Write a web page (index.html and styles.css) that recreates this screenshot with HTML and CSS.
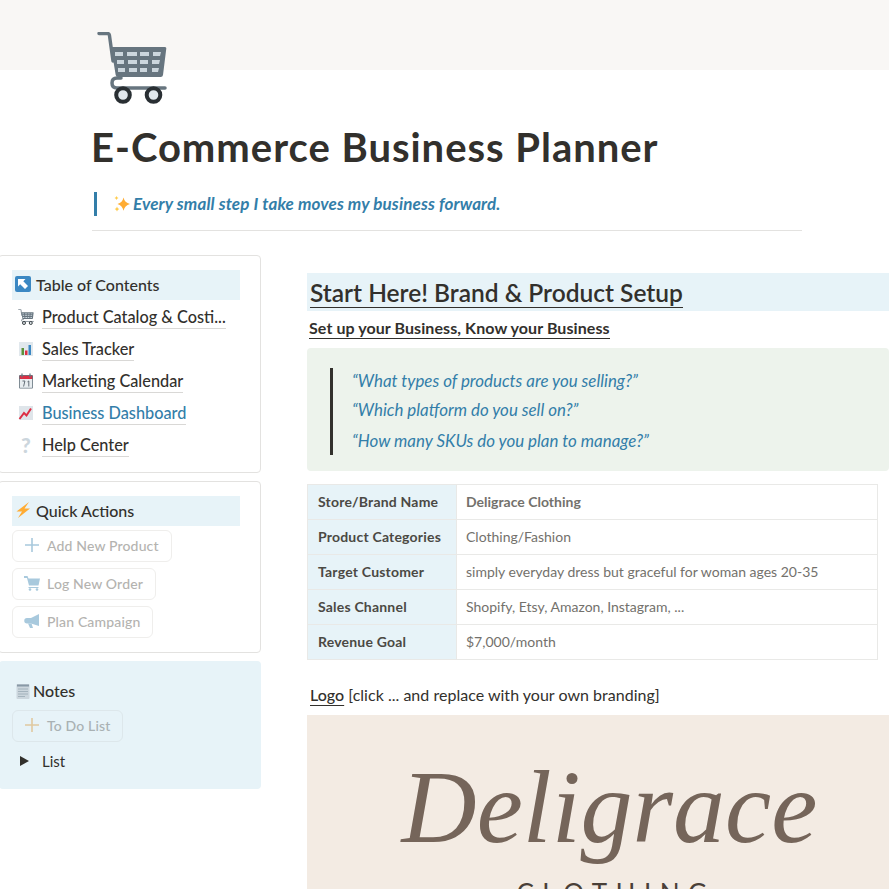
FILE: index.html
```html
<!DOCTYPE html>
<html lang="en">
<head>
  <meta charset="UTF-8" />
  <title>E-Commerce Business Planner</title>
  <link rel="stylesheet" href="styles.css">
</head>
<body>
  <svg class="defs" width="0" height="0">
    <symbol id="cart" viewBox="0 0 70 72">
      <path d="M2 1.500h8.500q1.600 0 1.900 1.600L16 29" fill="none" stroke="#67757f" stroke-width="3.400" stroke-linecap="round"/>
      <path d="M14 15h54q1.500 0 1.300 1.600L66 43q-.3 2-2.300 2H21q-2 0-2.300-2z" fill="#67757f"/>
      <path d="M18 20h8v4h-8zM30 20h10v4H30zM43 20h9v4h-9zM56 20h8l-1 4h-7zM20 28h7v4h-7zM31 28h9v4h-9zM43 28h8v4h-8zM55 28h8l-1 4h-7zM21 36h7v4h-7zM32 36h8v4h-8zM43 36h7v4h-7zM55 36h7l-1 4h-6z" fill="#ccd6dd"/>
      <path d="M68 56H20q-5 0-5-5t5-5h4" fill="none" stroke="#67757f" stroke-width="3.500" stroke-linecap="round"/>
      <circle cx="26" cy="63" r="6.800" fill="#e1e8ed" stroke="#292f33" stroke-width="4"/>
      <circle cx="56.500" cy="63" r="6.800" fill="#e1e8ed" stroke="#292f33" stroke-width="4"/>
    </symbol>
  </svg>

  <header class="cover"></header>

  <div class="page-head">
    <svg class="page-icon"><use href="#cart"/></svg>
    <h1>E-Commerce Business Planner</h1>
    <blockquote class="motto">
      <svg class="ico-spark" viewBox="0 0 16 16"><path d="M9.500 1.500q1 5 6.500 6.500-5.500 1.500-6.500 6.800Q8.500 9.500 3.500 8 8.500 6.500 9.500 1.500z" fill="#ffac33"/><path d="M2.500 0q.3 1.600 2 2-1.700.4-2 2-.3-1.600-2-2 1.700-.4 2-2zM3 10.500q.4 2 2.300 2.500-1.900.5-2.300 2.500-.4-2-2.300-2.500 1.900-.5 2.300-2.500z" fill="#ffcc4d"/></svg>
      <em>Every small step I take moves my business forward.</em>
    </blockquote>
    <hr class="divider">
  </div>

  <div class="columns">
    <aside class="sidebar">
      <section class="card card-toc">
        <h3 class="band">
          <svg class="ico" viewBox="0 0 16 16"><rect width="16" height="16" rx="2" fill="#3b88c3"/><path d="M3 3h7.500L8.300 5.200l4.700 4.700L10 13 5.200 8.200 3 10.500z" fill="#fff"/></svg>
          Table of Contents
        </h3>
        <ul class="toc">
          <li><svg class="ico"><use href="#cart"/></svg><a>Product Catalog &amp; Costi...</a></li>
          <li>
            <svg class="ico" viewBox="0 0 16 16"><rect x="1" y="1" width="14" height="14" fill="#e1e8ed"/><rect x="3.500" y="7" width="2.500" height="7" fill="#5c913b"/><rect x="7" y="9.500" width="2.500" height="4.500" fill="#dd2e44"/><rect x="10.500" y="4" width="2.500" height="10" fill="#3b88c3"/></svg>
            <a>Sales Tracker</a>
          </li>
          <li>
            <svg class="ico" viewBox="0 0 16 16"><rect x="1" y="2" width="14" height="13.500" rx="1" fill="#66757f"/><rect x="1.800" y="6" width="12.400" height="8.800" fill="#e8edf0"/><rect x="1.800" y="2.800" width="12.400" height="3.200" fill="#dd2e44"/><path d="M4 .5v4M12 .5v4" stroke="#67757f" stroke-width="1.200"/><path d="M4.500 8h2.400L5.600 13.500M9.500 8.800l1.300-.8v5.500" fill="none" stroke="#55606a" stroke-width=".9"/></svg>
            <a>Marketing Calendar</a>
          </li>
          <li class="is-blue">
            <svg class="ico" viewBox="0 0 16 16"><rect x="1" y="1" width="14" height="14" fill="#dfe5ea"/><path d="M1.500 14L6 8l2.500 2.500L13 3.500" fill="none" stroke="#dd2e44" stroke-width="2"/></svg>
            <a>Business Dashboard</a>
          </li>
          <li><span class="ico ico-q">?</span><a>Help Center</a></li>
        </ul>
      </section>

      <section class="card">
        <h3 class="band">
          <svg class="ico" viewBox="0 0 16 16"><path d="M14 0L1.500 9.500H7L3 16 15 6.500H9.500z" fill="#ffac33"/></svg>
          Quick Actions
        </h3>
        <div class="actions">
          <button class="action">
            <svg class="ico" viewBox="0 0 16 16"><path d="M8 1v14M1 8h14" stroke="#a8c9dd" stroke-width="1.600"/></svg>
            Add New Product
          </button>
          <button class="action">
            <svg class="ico" viewBox="0 0 16 16"><path d="M0 1h3.500l1 2.500H16l-1.500 7H5L3 3H0z" fill="#a8c9dd"/><path d="M4.500 12h10v1h-10z" fill="#a8c9dd"/><circle cx="6" cy="14.500" r="1.300" fill="#a8c9dd"/><circle cx="13" cy="14.500" r="1.300" fill="#a8c9dd"/></svg>
            Log New Order
          </button>
          <button class="action">
            <svg class="ico" viewBox="0 0 16 16"><path d="M15 1v12L7 10.500H3a2.500 2.500 0 0 1 0-5.500h4z" fill="#a8c9dd"/><path d="M4 10.500h3.500L9 15H6z" fill="#a8c9dd"/></svg>
            Plan Campaign
          </button>
        </div>
      </section>

      <section class="card card-notes">
        <h3 class="notes-title">
          <svg class="ico" viewBox="0 0 16 16"><rect x="1.500" y="1" width="13" height="15" rx="1" fill="#ccd6dd"/><path d="M3 6h10M3 8.500h10M3 11h10M3 13.500h7" stroke="#99aab5" stroke-width=".8"/><path d="M2 1.500h12v2H2z" fill="#8899a6"/></svg>Notes
        </h3>
        <button class="action action-notes">
          <svg class="ico" viewBox="0 0 16 16"><path d="M8 1v14M1 8h14" stroke="#e0c9a0" stroke-width="1.600"/></svg>
          To Do List
        </button>
        <div class="toggle"><span class="arrow"></span>List</div>
      </section>
    </aside>

    <main class="content">
      <h2 class="section-title"><span>Start Here! Brand &amp; Product Setup</span></h2>
      <p class="section-sub"><span>Set up your Business, Know your Business</span></p>

      <div class="callout">
        <div class="questions">
          <p>“What types of products are you selling?”</p>
          <p>“Which platform do you sell on?”</p>
          <p>“How many SKUs do you plan to manage?”</p>
        </div>
      </div>

      <table class="setup">
        <tr><th>Store/Brand Name</th><td class="strong">Deligrace Clothing</td></tr>
        <tr><th>Product Categories</th><td>Clothing/Fashion</td></tr>
        <tr><th>Target Customer</th><td>simply everyday dress but graceful for woman ages 20-35</td></tr>
        <tr><th>Sales Channel</th><td>Shopify, Etsy, Amazon, Instagram, ...</td></tr>
        <tr><th>Revenue Goal</th><td>$7,000/month</td></tr>
      </table>

      <p class="logo-label"><u>Logo</u> [click ... and replace with your own branding]</p>

      <div class="logo-box">
        <div class="logo-name">Deligrace</div>
        <div class="logo-sub">CLOTHING</div>
      </div>
    </main>
  </div>
</body>
</html>
```

FILE: styles.css
```css
* {
  box-sizing: border-box;
}
html, body {
  height: 889px;
  overflow: hidden;
}
body {
  margin: 0;
  font-family: Lato, "Open Sans", sans-serif;
  color: #32302c;
  background: #fff;
}
.defs {
  position: absolute;
}
.cover {
  height: 70px;
  background: #f9f7f5;
}
.page-head {
  margin-left: 92px;
  width: 710px;
}
.page-icon {
  display: block;
  width: 70px;
  height: 72px;
  margin: -38px 0 0 5px;
  position: relative;
}
h1 {
  margin: 20px 0 0 -1px;
  font-size: 40px;
  line-height: 46px;
  font-weight: 700;
  letter-spacing: .98px;
}
.motto {
  display: flex;
  align-items: center;
  height: 24px;
  margin: 22px 0 0 2px;
  padding: 0 0 1px 17px;
  border-left: 3px solid #337ea9;
  color: #337ea9;
  font-size: 17px;
  font-weight: 700;
  letter-spacing: .14px;
}
.ico-spark {
  width: 16px;
  height: 16px;
  margin-right: 3px;
}
.divider {
  border: none;
  border-top: 1px solid #e3e2e0;
  margin: 14px 0 0;
}
.columns {
  display: grid;
  grid-template-columns: 261px 1fr;
  column-gap: 46px;
  margin-top: 24px;
}
.sidebar {
  display: flex;
  flex-direction: column;
  gap: 8px;
}
.card {
  margin-left: -2px;
  padding: 14px 20px 14px 13px;
  border: 1px solid #e3e2e0;
  border-radius: 4px;
}
.card-toc {
  padding-bottom: 11px;
}
.band {
  display: flex;
  align-items: center;
  gap: 5px;
  height: 30px;
  margin: 0;
  padding: 0 0 2px 3px;
  background: #e7f3f8;
  font-size: 16px;
  font-weight: 500;
}
.ico {
  display: block;
  width: 16px;
  height: 16px;
  flex: none;
}
.toc {
  list-style: none;
  margin: 1px 0 0;
  padding: 0;
}
.toc li {
  display: flex;
  align-items: center;
  height: 32px;
  padding-left: 6px;
  gap: 8px;
  font-size: 16.300px;
  font-weight: 500;
}
.toc a {
  line-height: 22px;
  border-bottom: 1px solid #d9d8d6;
  white-space: nowrap;
}
.toc .is-blue a {
  color: #337ea9;
}
.ico-q {
  color: #ccd6dd;
  font-weight: 900;
  font-size: 21px;
  line-height: 16px;
  text-align: center;
}
.actions {
  display: flex;
  flex-direction: column;
  align-items: flex-start;
  gap: 6px;
  margin-top: 4px;
}
.action {
  display: flex;
  align-items: center;
  gap: 7px;
  height: 32px;
  padding: 0 12px 2px 11px;
  border: 1px solid #efeeec;
  border-radius: 6px;
  background: transparent;
  font-family: inherit;
  font-size: 14px;
  font-weight: 500;
  letter-spacing: .15px;
  color: #b4b3b0;
}
.card-notes {
  height: 128px;
  padding-top: 20px;
  border: none;
  margin-left: -1px;
  background: #e7f3f8;
  padding-left: 13px;
}
.notes-title {
  display: flex;
  align-items: center;
  gap: 2px;
  margin: 0;
  padding-left: 3px;
  font-size: 16px;
  font-weight: 500;
  line-height: 20px;
}
.action-notes {
  margin-top: 9px;
  border-color: #dde7eb;
  color: #a9b1b3;
}
.toggle {
  display: flex;
  align-items: center;
  margin-top: 7px;
  padding-left: 8px;
  height: 24px;
  font-size: 15px;
}
.arrow {
  width: 0;
  height: 0;
  margin-right: 13px;
  border-left: 9px solid #32302c;
  border-top: 5px solid transparent;
  border-bottom: 5px solid transparent;
}
.content {
  width: 582px;
  padding-top: 18px;
}
.section-title {
  height: 38px;
  margin: 0;
  padding: 4px 0 0 3px;
  background: #e7f3f8;
  font-size: 24.500px;
  line-height: 32px;
  font-weight: 600;
}
.section-title span {
  display: inline-block;
  height: 31px;
  border-bottom: 1px solid #32302c;
}
.section-sub {
  margin: 7px 0 0 2px;
  font-size: 16px;
  line-height: 20px;
  font-weight: 700;
  letter-spacing: .08px;
}
.section-sub span {
  display: inline-block;
  border-bottom: 1px solid #32302c;
}
.callout {
  margin-top: 9px;
  height: 123px;
  padding: 20px 23px;
  border-radius: 4px;
  background: #edf3ec;
}
.questions {
  height: 87px;
  padding-left: 19px;
  border-left: 3px solid #32302c;
  color: #337ea9;
  font-size: 16.900px;
  font-style: italic;
}
.questions p {
  margin: 0;
  line-height: 20px;
  padding: 3px 0 6px;
}
.questions p:nth-child(2) {
  padding-bottom: 8px;
}
.setup {
  width: 571px;
  margin-top: 13px;
  border-collapse: collapse;
  font-size: 14px;
}
.setup th, .setup td {
  height: 35px;
  padding: 0 9px 2px;
  border: 1px solid #e9e9e7;
  text-align: left;
}
.setup th {
  width: 149px;
  padding-left: 10px;
  background: #e7f3f8;
  font-weight: 700;
  letter-spacing: .2px;
  color: #4b4944;
}
.setup td {
  color: #73716c;
}
.setup td.strong {
  font-weight: 700;
}
.logo-label {
  margin: 25px 0 0 3px;
  font-size: 16px;
  line-height: 20px;
  letter-spacing: .02px;
  padding-bottom: 1px;
}
.logo-label u {
  font-weight: 500;
  text-underline-offset: 4px;
}
.logo-box {
  height: 200px;
  margin-top: 9px;
  padding-top: 36px;
  background: #f3ebe3;
  text-align: center;
  color: #75655a;
}
.logo-name {
  font-family: "Liberation Serif", serif;
  font-style: italic;
  font-size: 104px;
  line-height: 112px;
  margin-left: 23px;
}
.logo-sub {
  font-size: 26px;
  letter-spacing: 8.500px;
  color: #4a4038;
  margin-top: 14px;
  margin-left: 36px;
}
```
